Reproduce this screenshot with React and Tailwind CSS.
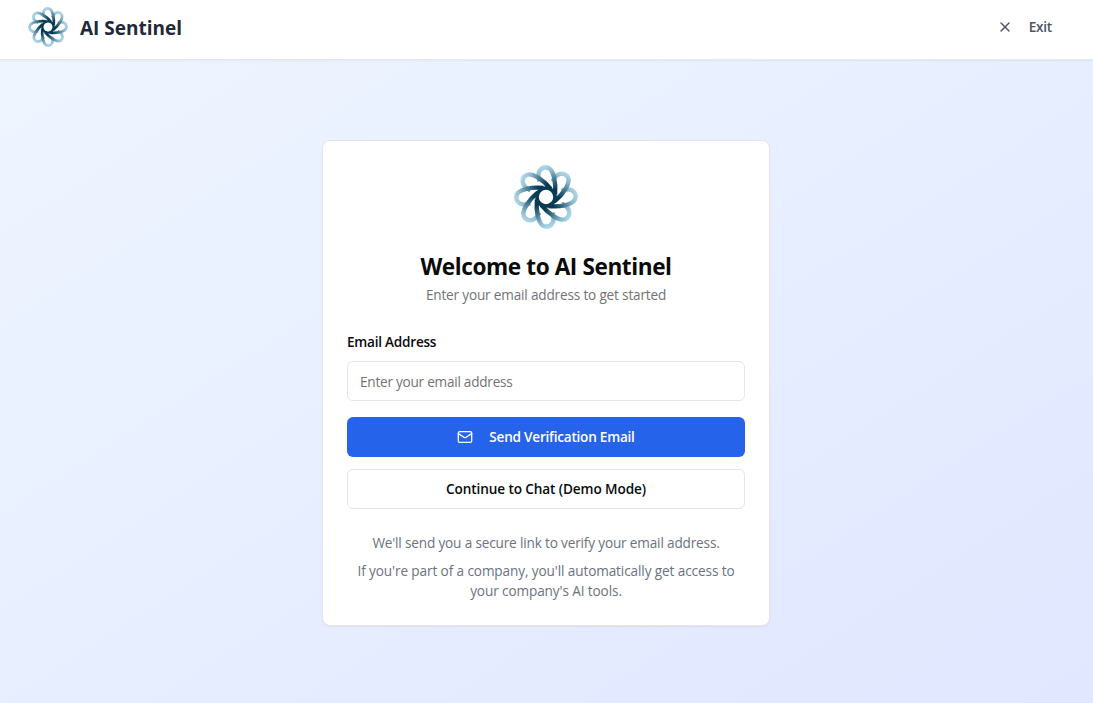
import { X, Mail } from 'lucide-react'

const PETALS = [0, 45, 90, 135, 180, 225, 270, 315]

function Logo({ id, className }) {
  return (
    <svg viewBox="-32 -32 64 64" className={className} fill="none" aria-hidden="true">
      <defs>
        <linearGradient id={id} gradientUnits="userSpaceOnUse" x1="-3" y1="-32" x2="7" y2="-7">
          <stop offset="0" stopColor="#b5dbea" />
          <stop offset="0.3" stopColor="#8fbbd0" />
          <stop offset="0.7" stopColor="#3b6f89" />
          <stop offset="1" stopColor="#073b54" />
        </linearGradient>
      </defs>
      {PETALS.map((angle) => (
        <path
          key={angle}
          transform={`rotate(${angle})`}
          d="M0 -29.8 C-6.5 -29.8 -9.5 -23 -6.3 -16"
          stroke={`url(#${id})`}
          strokeWidth="4.4"
        />
      ))}
      {PETALS.map((angle) => (
        <path
          key={angle}
          transform={`rotate(${angle})`}
          d="M9.1 -2.5 C10 -12 8.5 -29.8 -0.4 -29.8"
          stroke={`url(#${id})`}
          strokeWidth="4.4"
        />
      ))}
      <circle r="9" stroke="#073b54" strokeWidth="3.6" />
    </svg>
  )
}

export default function App() {
  return (
    <div className="flex h-[703px] flex-col overflow-hidden bg-[linear-gradient(to_bottom_right,#eff6ff,#e0e7ff)] font-['Open_Sans','Noto_Sans',sans-serif]">
      <header className="flex h-[60px] shrink-0 items-start justify-between border-b border-gray-200 bg-white pl-7 pr-[41px] pt-[7px] shadow-[0_1px_2px_rgba(0,0,0,0.05)]">
        <div className="flex h-10 items-center gap-3">
          <Logo id="logo-small" className="size-10" />
          <h1 className="pt-px text-[19px] leading-7 font-bold text-[#1f2937]">AI Sentinel</h1>
        </div>
        <button className="flex h-10 items-center gap-4 text-[13.6px] font-semibold tracking-[-0.018em] text-[#4b5563]">
          <X size={16} strokeWidth={2} />
          <span>Exit</span>
        </button>
      </header>
      <main className="flex justify-center pt-20 pr-px">
        <section className="h-[486px] w-[448px] rounded-lg border border-[#e5e5e5] bg-white p-6 text-center shadow-[0_1px_2px_rgba(0,0,0,0.05)]">
          <Logo id="logo-large" className="mx-auto size-16" />
          <h2 className="mt-[22px] text-[22.6px] leading-8 font-bold tracking-[-0.018em] text-[#0a0a0a]">Welcome to AI Sentinel</h2>
          <p className="mt-[2px] text-[13.6px] leading-5 tracking-[-0.013em] text-[#737373]">Enter your email address to get started</p>
          <form className="mt-[27px] flex flex-col" onSubmit={(e) => e.preventDefault()}>
            <label htmlFor="email" className="text-left text-[13.6px] leading-5 font-semibold tracking-[-0.018em] text-[#0a0a0a]">Email Address</label>
            <input id="email" type="email" placeholder="Enter your email address" className="mt-[9px] h-10 rounded-md border border-[#e5e5e5] px-3 text-[13.6px] tracking-[-0.018em] outline-none placeholder:text-[#737373]" />
            <button className="mt-4 flex h-10 items-center justify-center gap-4 rounded-md bg-[#2563eb] text-[13.6px] font-semibold tracking-[-0.018em] text-white">
              <Mail size={16} />
              <span>Send Verification Email</span>
            </button>
            <button type="button" className="mt-3 h-10 rounded-md border border-[#e5e5e5] text-[13.6px] font-semibold tracking-[-0.008em] text-[#0a0a0a]">Continue to Chat (Demo Mode)</button>
          </form>
          <div className="mt-6 text-[13.6px] leading-5 text-[#6b7280]">
            <p className="tracking-[-0.012em]">We'll send you a secure link to verify your email address.</p>
            <p className="mt-2 tracking-[-0.008em]">If you're part of a company, you'll automatically get access to<br />your company's AI tools.</p>
          </div>
        </section>
      </main>
    </div>
  )
}
